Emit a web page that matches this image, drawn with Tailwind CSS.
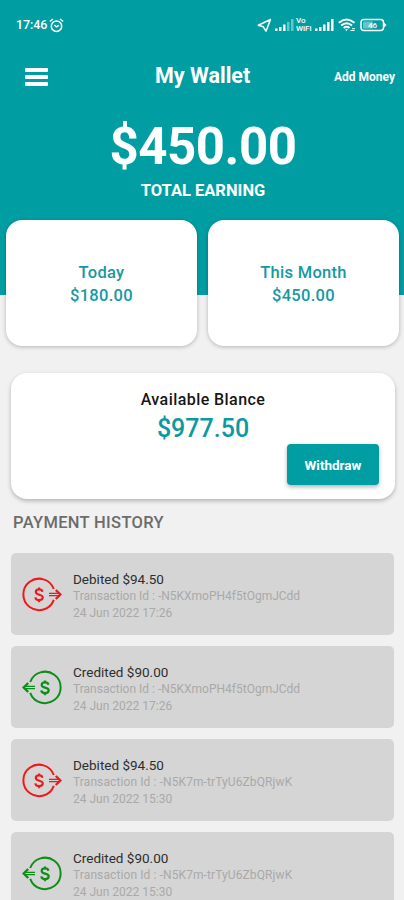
<!DOCTYPE html>
<html lang="en">
<head>
<meta charset="utf-8">
<title>My Wallet</title>
<script src="https://cdn.jsdelivr.net/npm/@tailwindcss/browser@4"></script>
</head>
<body class="h-[900px] overflow-hidden bg-[#f1f1f1] font-['Roboto',sans-serif]">
<svg class="hidden">
  <symbol id="debit" viewBox="0 0 40 36">
    <g fill="none" stroke="currentColor" stroke-width="2">
      <path d="M31.800 13A15.700 15.700 0 1 0 31.800 23.800"/>
      <path d="M27 17.400h10M27 19.600h10" stroke-width="1.300"/>
      <path d="M20.500 15.700c-.3-1.600-1.600-2.300-3.400-2.300-2 0-3.300 1-3.300 2.500 0 3.600 7 1.900 7 5.400 0 1.700-1.500 2.800-3.600 2.800-2.100 0-3.600-1-3.800-2.800M17.100 11.500v2.500M17.100 23.700v2.500" stroke-width="2.100"/>
      <path d="M33.800 14L38.300 18.500L33.800 23" stroke-width="2.400"/>
    </g>
  </symbol>
  <symbol id="credit" viewBox="0 0 40 36">
    <g fill="none" stroke="currentColor" stroke-width="2">
      <path d="M8.200 13A15.700 15.700 0 1 1 8.200 23.800"/>
      <path d="M3 17.400h10M3 19.600h10" stroke-width="1.200"/>
      <path d="M26.400 15.700c-.3-1.600-1.600-2.300-3.400-2.300-2 0-3.300 1-3.300 2.500 0 3.600 7 1.900 7 5.400 0 1.700-1.500 2.800-3.600 2.800-2.100 0-3.600-1-3.800-2.800M23 11.500v2.500M23 23.700v2.500" stroke-width="2.200"/>
      <path d="M6.200 14L1.700 18.500L6.200 23" stroke-width="2.400"/>
    </g>
  </symbol>
</svg>
<header class="h-[295px] bg-[#009ea3] text-white">
  <div class="flex h-[50px] items-center justify-between pr-[17px] pl-4">
    <div class="flex items-center gap-[2px]">
      <span class="text-[12.500px] font-medium leading-4 tracking-[-0.1px]">17:46</span>
      <svg class="h-[15px] w-[15px]" viewBox="0 0 15 15" fill="none" stroke="#fff" stroke-width="1.500"><circle cx="7.500" cy="8.200" r="5.200"/><path d="M.8 3.500L4 1M14.200 3.500L11 1M5.300 7l2.200 1.800L10 7.400"/></svg>
    </div>
    <div class="flex items-center">
      <svg class="h-[15px] w-[15px]" viewBox="0 0 15 15" fill="none" stroke="#fff" stroke-width="1.500" stroke-linejoin="round"><path d="M13.500 1.500L1.300 7.200l5 1.600L9 13.200z"/></svg>
      <svg class="ml-[3px] h-3 w-[19px]" viewBox="0 0 19 12" fill="#fff"><path d="M0 9.500h2.500V12H0zM4 8h2.500v4H4zM8 5.500h2.500V12H8z"/><path d="M12 3h2.500v9H12zM16 0h2.500v12H16z" opacity=".4"/></svg>
      <div class="ml-[2px] w-[17px] text-[8px] font-medium leading-[8px]"><div>Vo</div><div>WiFi</div></div>
      <svg class="ml-[2px] h-3 w-[19px]" viewBox="0 0 19 12" fill="#fff"><path d="M0 9.500h2.500V12H0zM4 8h2.500v4H4zM8 5.500h2.500V12H8zM12 3h2.500v9H12zM16 0h2.500v12H16z"/></svg>
      <svg class="ml-[4px] h-[14px] w-[18px]" viewBox="0 0 18 14" fill="none" stroke="#fff" stroke-width="1.900"><path d="M.8 4.800Q8.500-2 16.500 4.800M3.200 7.500Q8.600 2.800 14 7.500M5.700 10Q8.600 7.600 11.500 10"/><path d="M7 11.200h3L8.500 13z" fill="#fff" stroke="none"/><path d="M12.500 12.500h4M14 10.700h3" stroke-width="1"/></svg>
      <svg class="ml-[4px] h-[14px] w-[27px]" viewBox="0 0 27 14"><rect x="1" y="1.500" width="22.500" height="11" rx="3" fill="none" stroke="#fff" stroke-width="1.500"/><path d="M24 4.500L26.500 7L24 9.500Z" fill="#fff"/><rect x="3" y="3.500" width="10" height="7" rx="1" fill="#fff" opacity=".4"/><text x="12.500" y="9.800" text-anchor="middle" font-size="8" font-weight="500" fill="#fff">46</text></svg>
    </div>
  </div>
  <div class="flex h-[52px] items-center justify-between pr-[9px] pl-[25px]">
    <div class="mt-[2px] flex w-[61px] flex-col gap-[3px]"><i class="h-1 w-[23px] rounded-[1px] bg-white"></i><i class="h-1 w-[23px] rounded-[1px] bg-white"></i><i class="h-1 w-[23px] rounded-[1px] bg-white"></i></div>
    <h1 class="ml-[69px] w-[100px] text-[21.500px] font-bold leading-6 whitespace-nowrap">My Wallet</h1>
    <span class="mt-[2px] ml-auto text-[12px] font-bold whitespace-nowrap">Add Money</span>
  </div>
  <div class="flex flex-col items-center pt-[14px] pl-[2px]">
    <div class="text-[51px] font-bold leading-[62px] tracking-[-0.5px]">$450.00</div>
    <div class="mt-[1px] text-[16.500px] font-bold leading-6">TOTAL EARNING</div>
  </div>
</header>
<main>
  <section class="relative -mt-[75px] flex gap-[11px] pl-[6px] font-medium text-[#1599a2]">
    <div class="flex h-[126px] w-[191px] flex-col items-center rounded-[16px] bg-white pt-[41px] text-[16.500px] leading-[23px] tracking-[0.3px] shadow-[0_1px_4px_rgba(0,0,0,0.25)]"><div>Today</div><div>$180.00</div></div>
    <div class="flex h-[126px] w-[191px] flex-col items-center rounded-[16px] bg-white pt-[41px] text-[16.500px] leading-[23px] tracking-[0.3px] shadow-[0_1px_4px_rgba(0,0,0,0.25)]"><div>This Month</div><div>$450.00</div></div>
  </section>
  <section class="mt-[27px] ml-[11px] flex h-[126px] w-[384px] flex-col items-center rounded-[16px] bg-white pt-[15px] shadow-[0_2px_4px_rgba(0,0,0,0.25)]">
    <div class="text-[16px] font-medium leading-6 tracking-[0.430px] text-[#161616]">Available Blance</div>
    <div class="mt-[1px] text-[25px] font-medium leading-8 text-[#0d99a1]">$977.50</div>
    <button class="-mt-[1px] mr-[16px] h-[41px] w-[92px] self-end rounded-[4px] bg-[#009ea3] pt-[2px] text-[13.500px] font-bold text-white shadow-[0_2px_4px_rgba(0,0,0,0.3)]">Withdraw</button>
  </section>
  <h2 class="mt-[12px] ml-[13px] text-[16.500px] font-medium leading-6 tracking-[0.330px] text-[#6c6c6c]">PAYMENT HISTORY</h2>
  <section class="mt-[18px] ml-[11px] flex w-[383px] flex-col gap-[11px]">
    <article class="flex h-[82px] shrink-0 rounded-[5px] bg-[#d5d5d5] pl-[11px]">
      <svg class="mt-[23px] h-9 w-10 text-[#f01818]"><use href="#debit"/></svg>
      <div class="ml-[11px] pt-[17px] text-[12px] leading-[16.500px] text-[#a9a9a9]"><div class="text-[13.500px] leading-[18px] text-[#2e2e2e]">Debited $94.50</div><div>Transaction Id : -N5KXmoPH4f5tOgmJCdd</div><div>24 Jun 2022 17:26</div></div>
    </article>
    <article class="flex h-[82px] shrink-0 rounded-[5px] bg-[#d5d5d5] pl-[11px]">
      <svg class="mt-[23px] h-9 w-10 text-[#0d8e19]"><use href="#credit"/></svg>
      <div class="ml-[11px] pt-[17px] text-[12px] leading-[16.500px] text-[#a9a9a9]"><div class="text-[13.500px] leading-[18px] text-[#2e2e2e]">Credited $90.00</div><div>Transaction Id : -N5KXmoPH4f5tOgmJCdd</div><div>24 Jun 2022 17:26</div></div>
    </article>
    <article class="flex h-[82px] shrink-0 rounded-[5px] bg-[#d5d5d5] pl-[11px]">
      <svg class="mt-[23px] h-9 w-10 text-[#f01818]"><use href="#debit"/></svg>
      <div class="ml-[11px] pt-[17px] text-[12px] leading-[16.500px] text-[#a9a9a9]"><div class="text-[13.500px] leading-[18px] text-[#2e2e2e]">Debited $94.50</div><div class="tracking-[0.1px]">Transaction Id : -N5K7m-trTyU6ZbQRjwK</div><div>24 Jun 2022 15:30</div></div>
    </article>
    <article class="flex h-[82px] shrink-0 rounded-[5px] bg-[#d5d5d5] pl-[11px]">
      <svg class="mt-[23px] h-9 w-10 text-[#0d8e19]"><use href="#credit"/></svg>
      <div class="ml-[11px] pt-[17px] text-[12px] leading-[16.500px] text-[#a9a9a9]"><div class="text-[13.500px] leading-[18px] text-[#2e2e2e]">Credited $90.00</div><div class="tracking-[0.1px]">Transaction Id : -N5K7m-trTyU6ZbQRjwK</div><div>24 Jun 2022 15:30</div></div>
    </article>
  </section>
</main>
</body>
</html>
